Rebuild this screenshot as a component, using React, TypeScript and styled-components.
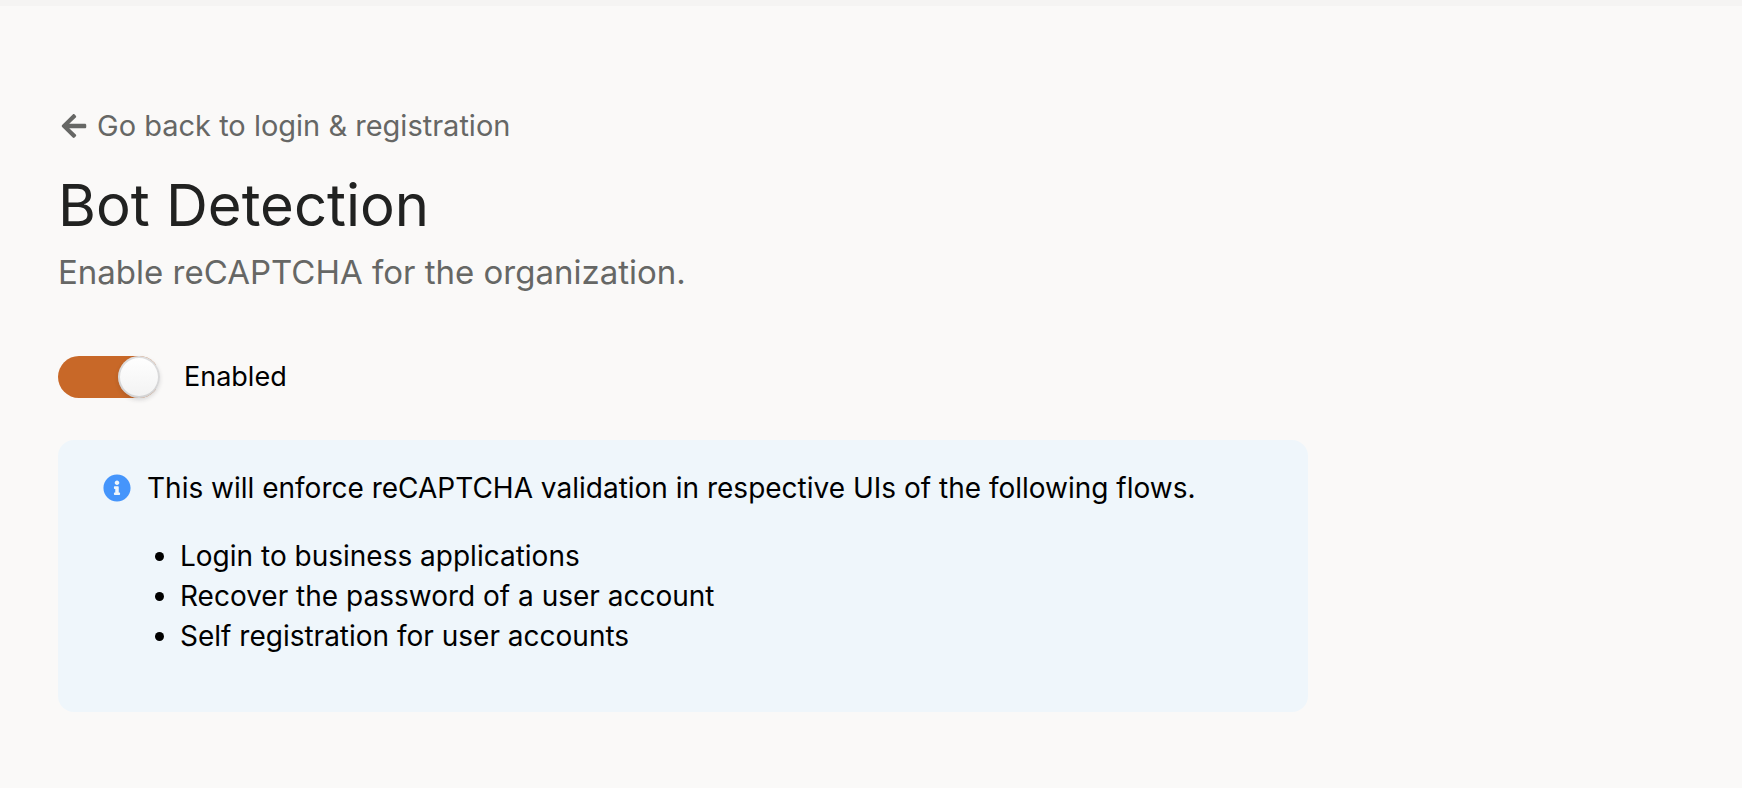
import React, { useState } from 'react';
import styled, { createGlobalStyle } from 'styled-components';
import { FaArrowLeft, FaInfoCircle } from 'react-icons/fa';

const GlobalStyle = createGlobalStyle`
  *, *::before, *::after { box-sizing: border-box; }
  body {
    margin: 0;
    background: #faf9f8;
    color: #000;
    font-family: Inter, "Liberation Sans", sans-serif;
    font-size: 28px;
    line-height: 40px;
  }
`;

const Page = styled.div`
  min-height: 100vh;
  border-top: 6px solid #f5f4f3;
  padding: 100px 17px 60px 58px;
`;

const BackLink = styled.a`
  display: flex;
  align-items: center;
  gap: 9px;
  width: fit-content;
  padding-left: 2px;
  color: #666765;
  font-size: 29px;
  text-decoration: none;
`;

const Title = styled.h1`
  margin: 27px 0 0;
  color: #212221;
  font-size: 58px;
  font-weight: 400;
  line-height: 64px;
`;

const Subtitle = styled.p`
  margin: 15px 0 0;
  color: #666765;
  font-size: 33px;
`;

const ToggleRow = styled.label`
  display: flex;
  align-items: center;
  gap: 24px;
  width: fit-content;
  margin-top: 64px;
  font-size: 27px;
  line-height: 42px;
  cursor: pointer;
`;

const Toggle = styled.input`
  appearance: none;
  flex: none;
  display: flex;
  width: 102px;
  height: 42px;
  margin: 0;
  background: linear-gradient(#d4d4d4, #d4d4d4) left / 98px 42px no-repeat;
  border-radius: 21px;
  cursor: pointer;

  &::before {
    content: '';
    width: 42px;
    height: 42px;
    border-radius: 50%;
    background: linear-gradient(#fff, #f2f2f2);
    box-shadow: 0 2px 4px rgba(34, 36, 38, 0.15), inset 0 0 0 2px rgba(34, 36, 38, 0.15);
  }

  &:checked {
    justify-content: flex-end;
    background-image: linear-gradient(#c86828, #c86828);
  }
`;

const Notice = styled.section`
  display: flex;
  align-items: flex-start;
  gap: 16px;
  width: 75%;
  margin-top: 42px;
  padding: 28px 45px;
  border-radius: 16px;
  background: #eff6fb;
`;

const NoticeIcon = styled(FaInfoCircle)`
  flex: none;
  margin-top: 6px;
  color: #4595fb;
`;

const NoticeText = styled.p`
  margin: 0;
`;

const FlowList = styled.ul`
  margin: 28px 0;
  padding: 0 0 0 8px;
  list-style: none;
`;

const Flow = styled.li`
  display: flex;
  align-items: center;
  gap: 16px;

  &::before {
    content: '';
    width: 9px;
    height: 9px;
    border-radius: 50%;
    background: currentColor;
  }
`;

const flows = [
  'Login to business applications',
  'Recover the password of a user account',
  'Self registration for user accounts',
];

export default function App() {
  const [enabled, setEnabled] = useState(true);

  return (
    <>
      <GlobalStyle />
      <Page as="main">
        <BackLink href="#login-registration">
          <FaArrowLeft size={28} aria-hidden="true" />
          Go back to login &amp; registration
        </BackLink>
        <Title>Bot Detection</Title>
        <Subtitle>Enable reCAPTCHA for the organization.</Subtitle>
        <ToggleRow htmlFor="bot-detection">
          <Toggle
            id="bot-detection"
            type="checkbox"
            checked={enabled}
            onChange={(event) => setEnabled(event.target.checked)}
          />
          {enabled ? 'Enabled' : 'Disabled'}
        </ToggleRow>
        <Notice>
          <NoticeIcon size={28} aria-hidden="true" />
          <div>
            <NoticeText>
              This will enforce reCAPTCHA validation in respective UIs of the following flows.
            </NoticeText>
            <FlowList>
              {flows.map((flow) => (
                <Flow key={flow}>{flow}</Flow>
              ))}
            </FlowList>
          </div>
        </Notice>
      </Page>
    </>
  );
}
